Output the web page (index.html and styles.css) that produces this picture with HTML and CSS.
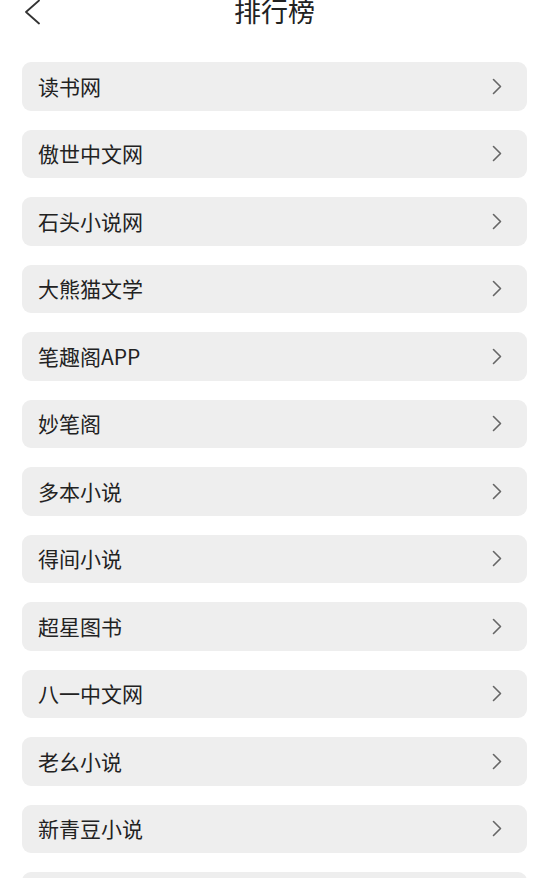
FILE: index.html
```html
<!DOCTYPE html>
<html lang="zh-CN">
<head>
<meta charset="utf-8">
<title>排行榜</title>
<link rel="stylesheet" href="styles.css">
</head>
<body>
<header class="topbar">
  <div class="back">
    <svg width="16" height="26" viewBox="0 0 16 26"><polyline points="15,1.5 2,13 15,24.5" fill="none" stroke="#333" stroke-width="1.8" stroke-linecap="round" stroke-linejoin="round"/></svg>
  </div>
  <h1 class="title">排行榜</h1>
  <div class="spacer"></div>
</header>
<ul class="list">
  <li class="item"><span class="name">读书网</span><svg class="chev" width="10" height="17" viewBox="0 0 10 17"><polyline points="1.5,1.5 8.5,8.5 1.5,15.5" fill="none" stroke="#666" stroke-width="1.6" stroke-linecap="round" stroke-linejoin="round"/></svg></li>
  <li class="item"><span class="name">傲世中文网</span><svg class="chev" width="10" height="17" viewBox="0 0 10 17"><polyline points="1.5,1.5 8.5,8.5 1.5,15.5" fill="none" stroke="#666" stroke-width="1.6" stroke-linecap="round" stroke-linejoin="round"/></svg></li>
  <li class="item"><span class="name">石头小说网</span><svg class="chev" width="10" height="17" viewBox="0 0 10 17"><polyline points="1.5,1.5 8.5,8.5 1.5,15.5" fill="none" stroke="#666" stroke-width="1.6" stroke-linecap="round" stroke-linejoin="round"/></svg></li>
  <li class="item"><span class="name">大熊猫文学</span><svg class="chev" width="10" height="17" viewBox="0 0 10 17"><polyline points="1.5,1.5 8.5,8.5 1.5,15.5" fill="none" stroke="#666" stroke-width="1.6" stroke-linecap="round" stroke-linejoin="round"/></svg></li>
  <li class="item"><span class="name">笔趣阁APP</span><svg class="chev" width="10" height="17" viewBox="0 0 10 17"><polyline points="1.5,1.5 8.5,8.5 1.5,15.5" fill="none" stroke="#666" stroke-width="1.6" stroke-linecap="round" stroke-linejoin="round"/></svg></li>
  <li class="item"><span class="name">妙笔阁</span><svg class="chev" width="10" height="17" viewBox="0 0 10 17"><polyline points="1.5,1.5 8.5,8.5 1.5,15.5" fill="none" stroke="#666" stroke-width="1.6" stroke-linecap="round" stroke-linejoin="round"/></svg></li>
  <li class="item"><span class="name">多本小说</span><svg class="chev" width="10" height="17" viewBox="0 0 10 17"><polyline points="1.5,1.5 8.5,8.5 1.5,15.5" fill="none" stroke="#666" stroke-width="1.6" stroke-linecap="round" stroke-linejoin="round"/></svg></li>
  <li class="item"><span class="name">得间小说</span><svg class="chev" width="10" height="17" viewBox="0 0 10 17"><polyline points="1.5,1.5 8.5,8.5 1.5,15.5" fill="none" stroke="#666" stroke-width="1.6" stroke-linecap="round" stroke-linejoin="round"/></svg></li>
  <li class="item"><span class="name">超星图书</span><svg class="chev" width="10" height="17" viewBox="0 0 10 17"><polyline points="1.5,1.5 8.5,8.5 1.5,15.5" fill="none" stroke="#666" stroke-width="1.6" stroke-linecap="round" stroke-linejoin="round"/></svg></li>
  <li class="item"><span class="name">八一中文网</span><svg class="chev" width="10" height="17" viewBox="0 0 10 17"><polyline points="1.5,1.5 8.5,8.5 1.5,15.5" fill="none" stroke="#666" stroke-width="1.6" stroke-linecap="round" stroke-linejoin="round"/></svg></li>
  <li class="item"><span class="name">老幺小说</span><svg class="chev" width="10" height="17" viewBox="0 0 10 17"><polyline points="1.5,1.5 8.5,8.5 1.5,15.5" fill="none" stroke="#666" stroke-width="1.6" stroke-linecap="round" stroke-linejoin="round"/></svg></li>
  <li class="item"><span class="name">新青豆小说</span><svg class="chev" width="10" height="17" viewBox="0 0 10 17"><polyline points="1.5,1.5 8.5,8.5 1.5,15.5" fill="none" stroke="#666" stroke-width="1.6" stroke-linecap="round" stroke-linejoin="round"/></svg></li>
  <li class="item"></li>
</ul>
</body>
</html>
```
FILE: styles.css
```css
html, body {
  margin: 0;
  padding: 0;
  background: #ffffff;
  font-family: "Noto Sans CJK SC", "Noto Sans", sans-serif;
  color: #222222;
}
body {
  overflow: hidden;
  height: 878px;
}
.topbar {
  display: grid;
  grid-template-columns: 1fr auto 1fr;
  align-items: center;
  height: 22px;
  padding: 0 24px;
}
.back {
  display: flex;
  align-items: center;
  height: 22px;
}
.back svg {
  display: block;
  margin-top: 2px;
}
.title {
  margin: 0;
  font-size: 27px;
  font-weight: 400;
  line-height: 22px;
  color: #222222;
  letter-spacing: 0;
}
.list {
  list-style: none;
  margin: 0;
  padding: 40px 22px 0 22px;
  display: flex;
  flex-direction: column;
  gap: 19px;
}
.item {
  height: 48.5px;
  flex: none;
  background: #eeeeee;
  border-radius: 9px;
  display: flex;
  align-items: center;
  justify-content: space-between;
  padding: 0 25px 0 16px;
}
.name {
  font-size: 21px;
  line-height: 1;
  color: #222222;
}
.chev {
  display: block;
  flex: none;
}
```
